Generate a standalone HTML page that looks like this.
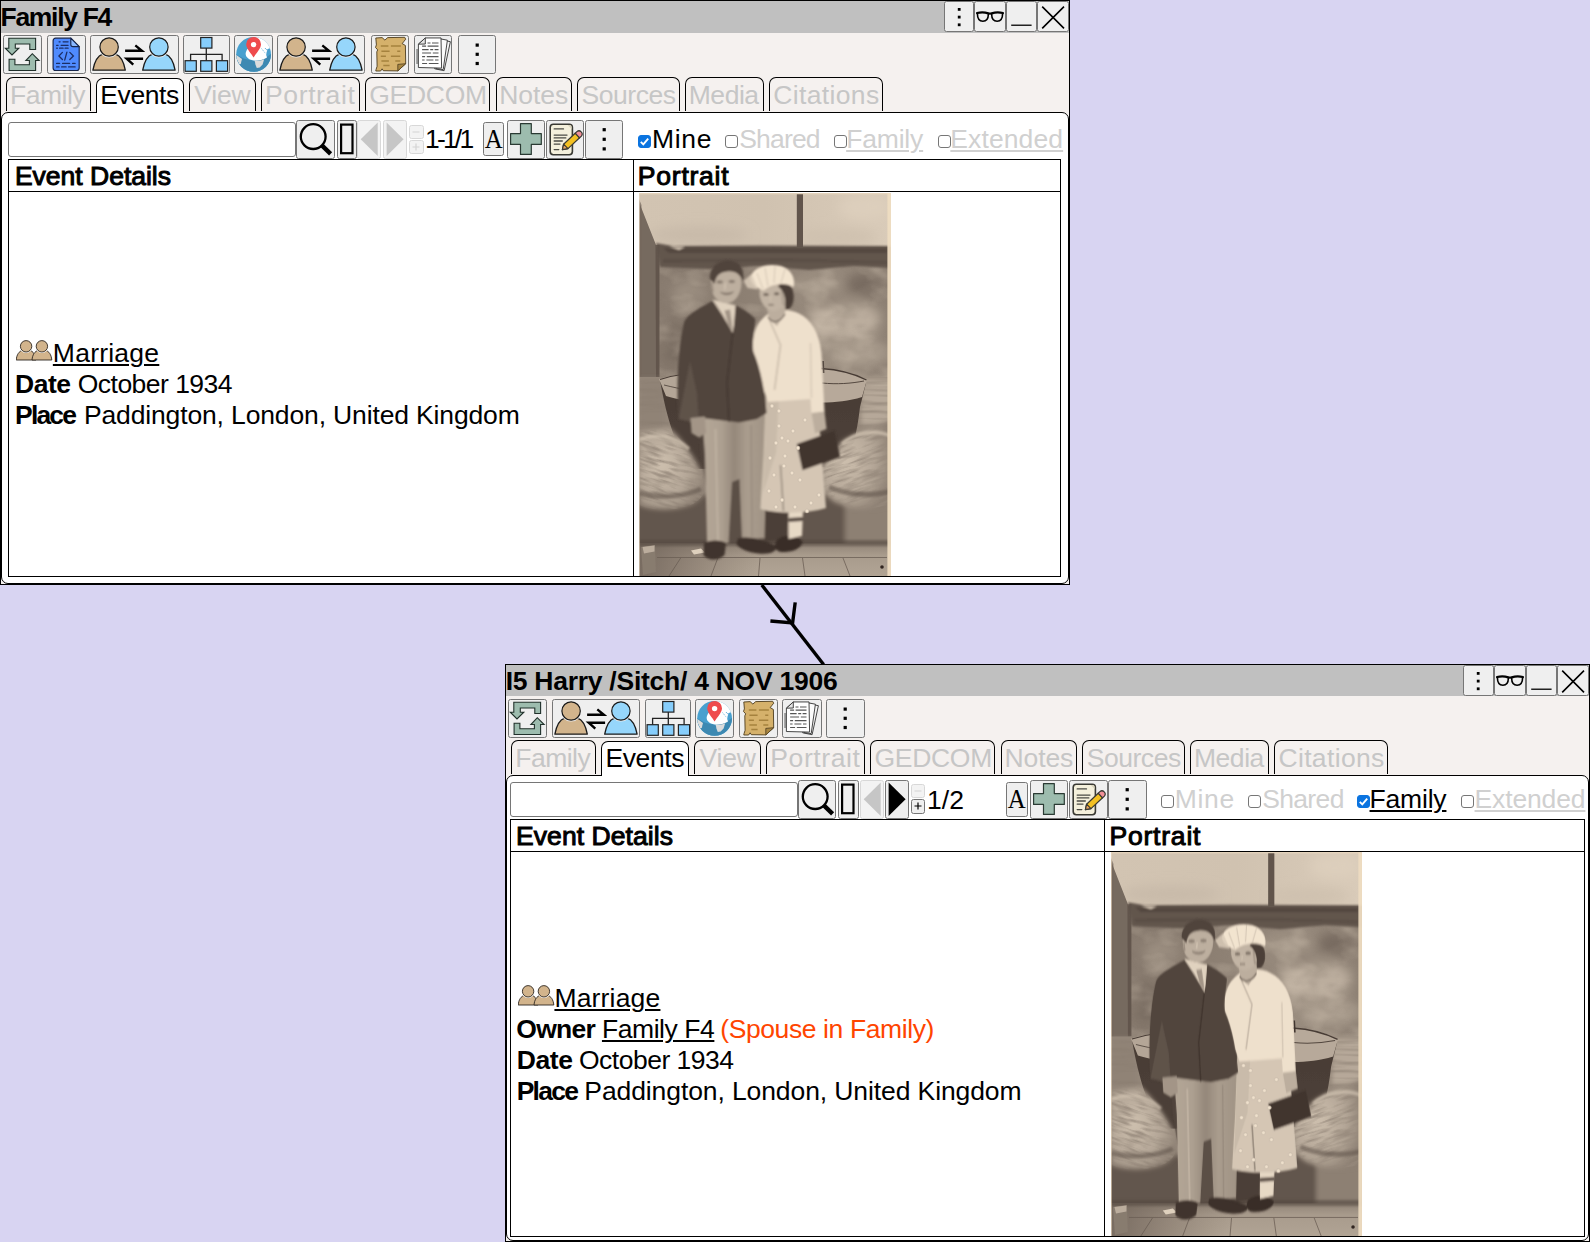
<!DOCTYPE html><html lang="en"><head><meta charset="utf-8"><title>Family F4</title><style>
*{box-sizing:border-box}
html,body{margin:0;padding:0;overflow:hidden}
body{width:1590px;height:1242px;overflow:hidden;position:relative;background:#d8d4f2;font-family:"Liberation Sans",sans-serif;font-size:26.5px;line-height:30px;color:#000}
.win{position:absolute;border:1px solid #000;background:#f5f1ef;overflow:hidden}
.win div,.win button,.win input,.win label,.win table,.win svg,.win span,.win a,.win b{position:absolute}
.line,.title,label,.tab span{white-space:pre}
.titlebar{left:0;right:0;background:#c0c0c0}
button{margin:0;padding:0;border:1px solid #767676;border-radius:2.5px;background:#efefef;font:inherit;color:#000;display:block;overflow:hidden}
button[disabled]{border-color:#d8d8d8;background:#f3f3f3;color:#bdbdbd}
button svg{left:-1px;top:-1px}
.tab{border:1px solid #000;border-bottom:none;border-radius:7px 7px 0 0;background:#f5f1ef;color:#c6c6c6}
.tab.sel{background:#fff;color:#000}
.panel{border:1px solid #000;border-radius:7px;background:#fff}
input.q{border:1px solid #767676;border-radius:3px;background:#fff;margin:0;padding:0}
.cb{width:13px;height:13px;border:1px solid #767676;border-radius:3px;background:#fff;margin:0;appearance:none;-webkit-appearance:none}
.cb:checked{background:#0b74e0;border-color:#0b74e0}
.ck{width:13px;height:13px}
label.off{color:#d0d0d0}
label.ul{text-decoration:underline;text-decoration-thickness:1.8px;text-underline-offset:2.2px}
table{border-collapse:collapse;table-layout:fixed;background:#fff}
td,th{border:1px solid #000;padding:0;position:relative;text-align:left;vertical-align:top;font-weight:400}

a.line{color:#000;text-decoration:underline;text-decoration-thickness:1.8px;text-underline-offset:2px}
.spouse{color:#ff4500}
</style></head><body>
<svg style="left:0;top:0;position:absolute" width="1590" height="1242" viewBox="0 0 1590 1242"><g stroke="#000" stroke-width="3.4" fill="none" stroke-linecap="butt"><path d="M761.8,585 L823.6,664.5"/><path d="M795.2,602.4 L792.6,623 L770.4,621"/></g></svg>
<div class="win" style="left:0px;top:0px;width:1070px;height:585px">
<div class="titlebar" style="top:0px;height:32px">
<div class="title" style="left:-0.45px;top:1.22px;letter-spacing:-1.319px;font-weight:700;">Family F4</div>
<button type="button" title="dots" style="left:943px;top:0px;width:30px;height:31px;"><svg width="30" height="31" viewBox="0 0 30 31" ><rect x="13.8" y="7.0" width="2.8" height="2.8" fill="#000"/><rect x="13.8" y="14.7" width="2.8" height="2.8" fill="#000"/><rect x="13.8" y="22.4" width="2.8" height="2.8" fill="#000"/></svg></button>
<button type="button" title="glasses" style="left:973px;top:0px;width:32px;height:31px;"><svg width="32" height="31" viewBox="0 0 32 31" ><g fill="none" stroke="#000" stroke-linecap="round"><path d="M3.1,12 C6,11.2 11,11.2 14.3,12.3 Q16,13 17.7,12.3 C21,11.2 26,11.2 28.9,12" stroke-width="2.3"/><path d="M3.4,12.6 C3.4,17.2 5.2,20.3 8.9,20.3 C12.6,20.3 14.3,17.2 14.4,13" stroke-width="1.6"/><path d="M28.6,12.6 C28.6,17.2 26.8,20.3 23.1,20.3 C19.4,20.3 17.7,17.2 17.6,13" stroke-width="1.6"/></g></svg></button>
<button type="button" title="min" style="left:1005px;top:0px;width:31px;height:31px;"><svg width="31" height="31" viewBox="0 0 31 31" ><path d="M5.2,24.2 H25.6" stroke="#222" stroke-width="1.6"/></svg></button>
<button type="button" title="close" style="left:1036px;top:0px;width:32px;height:31px;"><svg width="32" height="31" viewBox="0 0 32 31" ><path d="M5.2,5.6 L27,27.4 M27,5.6 L5.2,27.4" stroke="#000" stroke-width="1.6"/></svg></button>
</div>
<button type="button" title="refresh" style="left:2.2px;top:34.1px;width:38.4px;height:38.5px;"><svg width="38" height="38" viewBox="0 0 38 38" ><g fill="#9dbcae" stroke="#20302a" stroke-width="1.1" stroke-linejoin="miter"><polygon points="5.8,3.2 32.6,3.2 32.6,14.5 26.8,14.5 26.8,9.0 12.3,9.0 12.3,13.2 15.8,13.2 9.0,20.0 2.3,13.2 5.8,13.2"/><polygon points="6.1,35.5 32.6,35.5 32.6,25.5 36.1,25.5 29.3,18.7 22.9,25.5 26.4,25.5 26.4,29.7 11.9,29.7 11.9,24.2 6.1,24.2"/></g></svg></button>
<button type="button" title="code" style="left:46.3px;top:34.1px;width:38.4px;height:38.5px;"><svg width="38" height="38" viewBox="0 0 38 38" ><path d="M8.6,3.2 H23.8 L32.2,11.6 V33.0 a2.5,2.5 0 0 1 -2.5,2.5 H8.6 a2.5,2.5 0 0 1 -2.5,-2.5 V5.7 a2.5,2.5 0 0 1 2.5,-2.5 Z" fill="#4f8bff" stroke="#17254a" stroke-width="1.2" stroke-linejoin="round"/><path d="M23.8,3.2 V9.4 a2.2,2.2 0 0 0 2.2,2.2 H32.2 Z" fill="#8ab8ff" stroke="#17254a" stroke-width="1.1" stroke-linejoin="round"/><g stroke="#1b2e66" stroke-width="1.3" fill="none" stroke-linecap="round"><path d="M12.1,6.8 h1 M16.1,6.8 h5"/><path d="M9.6,10.3 h1.5 M14.1,10.3 h7"/><path d="M9.6,13.2 h0.8 M12.6,13.2 h3.5 M18.1,13.2 h3"/><path d="M15.4,17.4 L11.9,21.0 L15.4,24.5 M19.9,17.1 L17.7,25.1 M22.8,17.4 L26.4,21.0 L22.8,24.5"/><path d="M9.6,28.4 h3 M15.6,28.4 h7 M25.6,28.4 h2.5"/><path d="M9.6,31.9 h2.5 M14.6,31.9 h4.5 M21.6,31.9 h6.5"/></g></svg></button>
<button type="button" title="swap" style="left:89.3px;top:34.1px;width:88.4px;height:38.5px;"><svg width="88" height="38" viewBox="0 0 88 38" ><path d="M2.9,35.2 C4.6,26.200000000000003 8.1,20.700000000000003 12.6,19.200000000000003 L25.6,19.200000000000003 C30.1,20.700000000000003 33.6,26.200000000000003 35.3,35.2 Z" fill="#d2b48c" stroke="#1a1a1a" stroke-width="1.3" stroke-linejoin="round"/><circle cx="19.10000000000001" cy="12.0" r="10.6" fill="#efefef"/><circle cx="19.10000000000001" cy="12.0" r="9.2" fill="#d2b48c" stroke="#1a1a1a" stroke-width="1.2"/><path d="M52.7,35.2 C54.4,26.200000000000003 57.9,20.700000000000003 62.4,19.200000000000003 L75.4,19.200000000000003 C79.9,20.700000000000003 83.4,26.200000000000003 85.1,35.2 Z" fill="#96d6fb" stroke="#1a1a1a" stroke-width="1.3" stroke-linejoin="round"/><circle cx="68.89999999999999" cy="12.0" r="10.6" fill="#efefef"/><circle cx="68.89999999999999" cy="12.0" r="9.2" fill="#96d6fb" stroke="#1a1a1a" stroke-width="1.2"/><g stroke="#000" stroke-width="2.4" fill="none" stroke-linecap="butt"><path d="M35.1,15.7 H51.9 L45.3,10.4"/><path d="M53.1,23.7 H36.7 L43.3,29.6"/></g></svg></button>
<button type="button" title="tree" style="left:182.1px;top:34.1px;width:46.6px;height:38.5px;"><svg width="46" height="38" viewBox="0 0 46 38" ><g stroke="#222" stroke-width="1.3" fill="none"><path d="M23.3,13.1 V25.7 M7.6,25.7 V19.4 H39.1 V25.7"/></g><g fill="#86cdfb" stroke="#222" stroke-width="1.2"><rect x="17.7" y="2.5" width="11.2" height="10.6"/><rect x="2.1" y="25.7" width="11.2" height="10.6"/><rect x="17.7" y="25.7" width="11.2" height="10.6"/><rect x="33.4" y="25.7" width="11.2" height="10.6"/></g></svg></button>
<button type="button" title="globe" style="left:233px;top:34.1px;width:38.5px;height:38.5px;"><svg width="39" height="39" viewBox="0 0 39 39" ><defs><clipPath id="gclip"><circle cx="19.6" cy="19.4" r="17.4"/></clipPath></defs><circle cx="19.6" cy="19.4" r="17.4" fill="#48a0cf"/><g clip-path="url(#gclip)"><path d="M1,18.6 C8,23.6 14,25.4 19.6,25.4 C26.5,25.4 33,23 38.5,17.6 L40,40 L0,40 Z" fill="#3d89b2"/><path d="M11.9,17.2 L13,14.5 L16,12 L22,2 L30,1 L38,8 L36,13.2 L33.7,13.9 L32.6,17.2 L32.2,20.1 L33,22.5 C29,25 24,25.8 19.6,25.6 C17,25.2 14.5,24 13,22.3 C11.6,20.5 11.4,18.6 11.9,17.2 Z" fill="#fff"/><path d="M27.5,1 L38,9 L38,1 Z" fill="#f1f1f1"/><path d="M27.5,13.5 L31.5,18.5" stroke="#48a0cf" stroke-width="0.7" stroke-dasharray="1.2 0.9"/><path d="M31,13 C32,14.5 33,15 34,15" stroke="#48a0cf" stroke-width="0.8" fill="none"/><path d="M20.4,25.7 C24,26 27.5,25.4 30.2,24.2 L28.6,29.5 L25.7,32.4 L22.8,33.1 L21.4,29.5 L21,27 Z" fill="#dcdcdc"/><path d="M2,19.7 L8,23.9 L7.2,27 L6.9,28.8 L5.4,29.5 L3.2,25.2 L1.5,22 Z" fill="#dcdcdc"/></g><path d="M19.6,22.6 C17.200000000000003,18.400000000000002 12.200000000000001,13.600000000000001 12.200000000000001,9.3 a7.4,7.4 0 0 1 14.8,0 C27.0,13.600000000000001 22.0,18.400000000000002 19.6,22.6 Z" fill="#ef4b4d"/><circle cx="19.6" cy="9.600000000000001" r="2.7" fill="#fff"/></svg></button>
<button type="button" title="swap" style="left:276px;top:34.1px;width:88.4px;height:38.5px;"><svg width="88" height="38" viewBox="0 0 88 38" ><path d="M2.9,35.2 C4.6,26.200000000000003 8.1,20.700000000000003 12.6,19.200000000000003 L25.6,19.200000000000003 C30.1,20.700000000000003 33.6,26.200000000000003 35.3,35.2 Z" fill="#d2b48c" stroke="#1a1a1a" stroke-width="1.3" stroke-linejoin="round"/><circle cx="19.10000000000001" cy="12.0" r="10.6" fill="#efefef"/><circle cx="19.10000000000001" cy="12.0" r="9.2" fill="#d2b48c" stroke="#1a1a1a" stroke-width="1.2"/><path d="M52.7,35.2 C54.4,26.200000000000003 57.9,20.700000000000003 62.4,19.200000000000003 L75.4,19.200000000000003 C79.9,20.700000000000003 83.4,26.200000000000003 85.1,35.2 Z" fill="#96d6fb" stroke="#1a1a1a" stroke-width="1.3" stroke-linejoin="round"/><circle cx="68.89999999999999" cy="12.0" r="10.6" fill="#efefef"/><circle cx="68.89999999999999" cy="12.0" r="9.2" fill="#96d6fb" stroke="#1a1a1a" stroke-width="1.2"/><g stroke="#000" stroke-width="2.4" fill="none" stroke-linecap="butt"><path d="M35.1,15.7 H51.9 L45.3,10.4"/><path d="M53.1,23.7 H36.7 L43.3,29.6"/></g></svg></button>
<button type="button" title="parch" style="left:370px;top:34.1px;width:38.4px;height:38.5px;"><svg width="39" height="38" viewBox="0 0 39 38" ><polygon points="4.8,3 11.1,2.6 13.9,5.1 16.7,2.6 33.7,2.3 34.7,4.2 32.7,6.7 31.2,8.6 34.4,10.5 34.7,28.7 26.8,35.9 12.3,35.7 11.1,33.8 9.6,36 4.8,36 5.1,34.4 6.1,31.3 5.8,16.8 6.7,14.9 4.5,12.4 5.4,9.9" fill="#d5b16b" stroke="#4d3c1e" stroke-width="0.9" stroke-linejoin="round"/><path d="M26.8,29.4 L34.7,28.7 L26.8,35.9 Z" fill="#a98641" stroke="#4d3c1e" stroke-width="0.8" stroke-linejoin="round"/><g stroke="#a5823e" stroke-width="1.5" stroke-linecap="butt"><path d="M9.8,11.1 H17.4 M19.9,11.1 H29.9"/><path d="M10.4,16.2 H18.6 M26.2,16.2 H29.3"/><path d="M9.8,21.2 H14.9 M19.9,21.2 H29.3"/><path d="M10.4,26 H17.9 M24.3,26 H29.3"/><path d="M12.3,30.6 H18.6"/></g></svg></button>
<button type="button" title="docs" style="left:413px;top:34.1px;width:38.4px;height:38.5px;"><svg width="40" height="38" viewBox="0 0 40 38" ><g stroke="#333" stroke-width="0.9" stroke-linejoin="round"><path d="M24,4.2 L36.4,6.7 L30.1,35.7 L20.7,33.8 Z" fill="#f6f6f6"/><path d="M24,3.4 L33.4,5.2 L29.2,34.6 L22,33.6 Z" fill="#fbfbfb"/><path d="M11.3,2.95 L27,2.95 L27.6,33.1 L4.4,32.5 L4.4,9.2 Z" fill="#fff"/><path d="M11.3,2.95 L11.3,9 L4.4,9.2 Z" fill="#e4e4e4"/></g><g stroke="#555" stroke-width="1.2"><path d="M13.5,8 h3 M18,8 h6.5"/><path d="M8.1,11.1 h4 M13.6,11.1 h10.9"/><path d="M8.1,14.6 h6.5 M16.2,14.6 h3 M20.6,14.6 h3.9"/><path d="M8.1,18 h9 M18.8,18 h5.7"/><path d="M8.1,21.6 h3 M12.8,21.6 h11.7"/><path d="M8.1,25 h2.5 M12.4,25 h7 M21,25 h3.5"/><path d="M8.1,28.5 h5 M14.8,28.5 h9.7"/></g><path d="M3.1,14 v15" stroke="#8a8a8a" stroke-width="1.6"/></svg></button>
<button type="button" title="dots" style="left:457px;top:34.1px;width:38.4px;height:38.5px;"><svg width="38" height="38" viewBox="0 0 38 38" ><rect x="17.6" y="8.5" width="3.2" height="3.2" fill="#000"/><rect x="17.6" y="17.7" width="3.2" height="3.2" fill="#000"/><rect x="17.6" y="26.9" width="3.2" height="3.2" fill="#000"/></svg></button>
<div class="tab" style="left:5px;top:76px;width:85px;height:33.5px;z-index:1"><span style="left:3.05px;top:1.82px;letter-spacing:-0.51px;">Family</span></div>
<div class="tab sel" style="left:95.2px;top:77px;width:87.8px;height:35px;z-index:3"><span style="left:3.05px;top:0.82px;letter-spacing:-0.39px;">Events</span></div>
<div class="tab" style="left:188px;top:76px;width:67px;height:33.5px;z-index:1"><span style="left:4.25px;top:1.82px;letter-spacing:-0.15px;">View</span></div>
<div class="tab" style="left:260px;top:76px;width:98.7px;height:33.5px;z-index:1"><span style="left:3.05px;top:1.82px;letter-spacing:0.614px;">Portrait</span></div>
<div class="tab" style="left:364px;top:76px;width:125px;height:33.5px;z-index:1"><span style="left:3.25px;top:1.82px;letter-spacing:-0.29px;">GEDCOM</span></div>
<div class="tab" style="left:494.8px;top:76px;width:76.2px;height:33.5px;z-index:1"><span style="left:2.45px;top:1.82px;letter-spacing:-0.075px;">Notes</span></div>
<div class="tab" style="left:576.2px;top:76px;width:102.8px;height:33.5px;z-index:1"><span style="left:3.35px;top:1.82px;letter-spacing:-0.467px;">Sources</span></div>
<div class="tab" style="left:684.2px;top:76px;width:78.8px;height:33.5px;z-index:1"><span style="left:2.55px;top:1.82px;letter-spacing:-0.45px;">Media</span></div>
<div class="tab" style="left:768.2px;top:76px;width:113.6px;height:33.5px;z-index:1"><span style="left:3.05px;top:1.82px;letter-spacing:0.35px;">Citations</span></div>
<div class="panel" style="left:0px;top:111px;width:1068px;height:472px;z-index:2">
<input class="q" type="text" aria-label="Search" style="left:6.2px;top:9.3px;width:288.2px;height:34.5px">
<button type="button" title="Search" style="left:294px;top:7.2px;width:39.3px;height:38.5px;"><svg width="39" height="38" viewBox="0 0 39 38" ><circle cx="17.2" cy="16.6" r="12.4" fill="none" stroke="#000" stroke-width="2.3"/><path d="M25.6,25.2 L34.6,33.8" stroke="#000" stroke-width="4.4" stroke-linecap="butt"/></svg></button>
<button type="button" title="Column" style="left:334.5px;top:7.2px;width:20.0px;height:38.5px;"><svg width="20" height="38" viewBox="0 0 20 38" ><rect x="4.1" y="4.6" width="11.4" height="28.6" fill="none" stroke="#000" stroke-width="2.2"/></svg></button>
<button type="button" disabled title="Previous" style="left:355.4px;top:7.2px;width:24px;height:38.5px;"><svg width="24" height="38" viewBox="0 0 24 38" ><polygon points="3.7,19.3 20.7,2.4 20.7,36" fill="#c6c6c6"/></svg></button>
<button type="button" disabled title="Next" style="left:380.5px;top:7.2px;width:24px;height:38.5px;"><svg width="24" height="38" viewBox="0 0 24 38" ><polygon points="20.6,19.3 3.6,2.4 3.6,36" fill="#c6c6c6"/></svg></button>
<button type="button" disabled title="Less" style="left:407.2px;top:11.6px;width:14.4px;height:14px;"><svg width="14" height="14" viewBox="0 0 14 14" ><path d="M3.5,7 H10.5" stroke="#d4d4d4" stroke-width="1.2" fill="none"/></svg></button>
<button type="button" disabled title="More" style="left:407.2px;top:26.6px;width:14.4px;height:14.4px;"><svg width="14" height="14" viewBox="0 0 14 14" ><path d="M3.5,7 H10.5 M7,3.5 V10.5" stroke="#d4d4d4" stroke-width="1.2" fill="none"/></svg></button>
<div class="line" style="left:423.0px;top:11.22px;letter-spacing:-2.812px;">1-1/1</div>
<button type="button" title="Font" style="left:481.2px;top:9.2px;width:20.6px;height:34.2px;"><span style="left:0;right:0;top:1.04px;text-align:center;font-family:'Liberation Serif',serif;font-size:27px;transform:scaleX(0.92)">A</span></button>
<button type="button" title="Add" style="left:505.2px;top:7.2px;width:38.2px;height:38.5px;"><svg width="38" height="38" viewBox="0 0 38 38" ><path d="M13.5,3.6 H24.3 V13.6 H34.3 V24.4 H24.3 V34.4 H13.5 V24.4 H3.6 V13.6 H13.5 Z" fill="#9dbcae" stroke="#2a3a33" stroke-width="1.2" stroke-linejoin="round"/></svg></button>
<button type="button" title="Edit" style="left:544.2px;top:7.2px;width:38.2px;height:38.5px;"><svg width="38" height="38" viewBox="0 0 38 38" ><rect x="4.2" y="4.2" width="22.2" height="30.6" rx="3.2" fill="#f4f0dc" stroke="#3a3a34" stroke-width="1.6"/><path d="M21.6,5 L25.6,9 L25.6,6.6 Q25.6,5 24,5 Z" fill="#d9d4bd"/><g stroke="#4a4a44" stroke-width="1.3" stroke-linecap="round"><path d="M8.2,8.9 h9.3"/><path d="M8.2,15.1 h12.8"/><path d="M8.2,17.9 h11.6"/><path d="M8.2,21 h8.1"/><path d="M8.2,24.1 h5.8"/><path d="M8.2,29.6 h4.6"/></g><g stroke="#3a3a34" stroke-width="1.2" stroke-linejoin="round"><path d="M16.4,29.6 L17.6,24.2 L29.2,13.2 L33.6,17.8 L22,28.6 Z" fill="#f3c022"/><path d="M29.2,13.2 L30.9,11.6 a3.2,3.2 0 0 1 4.5,4.5 L33.6,17.8 Z" fill="#f29099"/><path d="M16.4,29.6 L17.6,24.2 L22,28.6 Z" fill="#e9a35f"/></g></svg></button>
<button type="button" title="More" style="left:583.2px;top:7.2px;width:38.2px;height:38.5px;"><svg width="38" height="38" viewBox="0 0 38 38" ><rect x="17.6" y="8.1" width="3.2" height="3.2" fill="#000"/><rect x="17.6" y="17.7" width="3.2" height="3.2" fill="#000"/><rect x="17.6" y="27.3" width="3.2" height="3.2" fill="#000"/></svg></button>
<input type="checkbox" class="cb" checked aria-label="Mine" style="left:636.2px;top:21.6px">
<svg class="ck" style="left:636.2px;top:21.6px" viewBox="0 0 13 13"><path d="M2.8,6.8 L5.3,9.3 L10.2,3.6" stroke="#fff" stroke-width="1.9" fill="none"/></svg>
<label style="left:649.95px;top:11.22px;letter-spacing:0.7px;">Mine</label>
<input type="checkbox" class="cb" aria-label="Shared" style="left:723.2px;top:21.6px">
<label class="off" style="left:737.25px;top:11.22px;letter-spacing:-0.82px;">Shared</label>
<input type="checkbox" class="cb" aria-label="Family" style="left:831.8px;top:21.6px">
<label class="off ul" style="left:844.15px;top:11.22px;letter-spacing:-0.17px;">Family</label>
<input type="checkbox" class="cb" aria-label="Extended" style="left:935.8px;top:21.6px">
<label class="off ul" style="left:948.35px;top:11.22px;letter-spacing:0.1px;">Extended</label>
<table style="left:6.3px;top:46.2px;width:1052.7px;height:417.0px"><colgroup><col style="width:624.7px"><col></colgroup>
<thead><tr style="height:31.8px"><th><div class="line" style="left:5.65px;top:0.32px;letter-spacing:-0.008px;-webkit-text-stroke:1px #000;">Event Details</div></th><th><div class="line" style="left:3.85px;top:0.32px;letter-spacing:0.771px;-webkit-text-stroke:1px #000;">Portrait</div></th></tr></thead>
<tbody><tr style="height:385.2px"><td>
<div style="left:6.6px;top:146.6px;width:37px;height:22px"><svg width="37" height="22" viewBox="0 0 37 22" ><path d="M0.2,21 C0.7,15.5 3.1,12.3 6.5,11.2 L13.7,11.2 C17.1,12.3 19.5,15.5 20.0,21 Z" fill="#d2b48c" stroke="#2e2720" stroke-width="0.9" stroke-linejoin="round"/><circle cx="10.1" cy="7.3" r="6.7" fill="#fff"/><circle cx="10.1" cy="7.3" r="5.7" fill="#d2b48c" stroke="#2e2720" stroke-width="0.9"/><path d="M16.0,21 C16.5,15.5 18.9,12.3 22.3,11.2 L29.5,11.2 C32.9,12.3 35.3,15.5 35.8,21 Z" fill="#d2b48c" stroke="#2e2720" stroke-width="0.9" stroke-linejoin="round"/><circle cx="25.9" cy="7.3" r="6.7" fill="#fff"/><circle cx="25.9" cy="7.3" r="5.7" fill="#d2b48c" stroke="#2e2720" stroke-width="0.9"/></svg></div>
<a class="line" style="left:43.55px;top:146.02px;letter-spacing:0.236px;">Marriage</a>
<b class="line" style="left:5.75px;top:177.12px;letter-spacing:-0.517px;font-weight:700;">Date</b>
<div class="line" style="left:68.45px;top:177.12px;letter-spacing:-0.527px;">October 1934</div>
<b class="line" style="left:5.75px;top:208.02px;letter-spacing:-1.825px;font-weight:700;">Place</b>
<div class="line" style="left:74.65px;top:208.02px;letter-spacing:-0.142px;">Paddington, London, United Kingdom</div>
</td><td>
<div style="left:5.3px;top:0.9px;width:252px;height:383px"><svg width="252" height="383" viewBox="0 0 252 383" preserveAspectRatio="none" style="display:block"><defs>
<filter id="b0a" x="0" y="0" width="252" height="383" filterUnits="userSpaceOnUse"><feGaussianBlur stdDeviation="0.6"/></filter>
<filter id="b0pa" x="0" y="0" width="252" height="383" filterUnits="userSpaceOnUse"><feGaussianBlur stdDeviation="0.8"/></filter>
<filter id="b1a" x="0" y="0" width="252" height="383" filterUnits="userSpaceOnUse"><feGaussianBlur stdDeviation="1.1"/></filter>
<filter id="b2a" x="0" y="0" width="252" height="383" filterUnits="userSpaceOnUse"><feGaussianBlur stdDeviation="2.4"/></filter>
<filter id="b4a" x="0" y="0" width="252" height="383" filterUnits="userSpaceOnUse"><feGaussianBlur stdDeviation="6"/></filter>
<filter id="nza" x="0" y="0" width="1" height="1"><feTurbulence type="fractalNoise" baseFrequency="0.03 0.045" numOctaves="3" seed="11" result="t"/><feColorMatrix in="t" type="matrix" values="0 0 0 0 0.27  0 0 0 0 0.22  0 0 0 0 0.17  1.9 0 0 0 -0.78"/></filter>
<filter id="nla" x="0" y="0" width="1" height="1"><feTurbulence type="fractalNoise" baseFrequency="0.03 0.045" numOctaves="3" seed="23" result="t"/><feColorMatrix in="t" type="matrix" values="0 0 0 0 0.78  0 0 0 0 0.73  0 0 0 0 0.63  1.9 0 0 0 -0.85"/></filter>
<filter id="nwa" x="0" y="0" width="1" height="1"><feTurbulence type="fractalNoise" baseFrequency="0.02 0.22" numOctaves="2" seed="3" result="t"/><feColorMatrix in="t" type="matrix" values="0 0 0 0 0.25  0 0 0 0 0.2  0 0 0 0 0.15  2.4 0 0 0 -1.0"/></filter>
<filter id="nsa" x="0" y="0" width="1" height="1"><feTurbulence type="fractalNoise" baseFrequency="0.05 0.3" numOctaves="2" seed="9" result="t"/><feColorMatrix in="t" type="matrix" values="0 0 0 0 0.3  0 0 0 0 0.25  0 0 0 0 0.19  3 0 0 0 -1.25"/></filter>
<linearGradient id="skya" x1="0" y1="0" x2="1" y2="0"><stop offset="0" stop-color="#85776a"/><stop offset="0.4" stop-color="#8d7f6d"/><stop offset="0.75" stop-color="#998b78"/><stop offset="1" stop-color="#8d7f6d"/></linearGradient>
<linearGradient id="topa" x1="0" y1="0" x2="1" y2="0"><stop offset="0" stop-color="#cec5b2"/><stop offset="0.5" stop-color="#cdc3af"/><stop offset="1" stop-color="#d5ccba"/></linearGradient>
<linearGradient id="flra" x1="0" y1="0" x2="0" y2="1"><stop offset="0" stop-color="#918370"/><stop offset="0.35" stop-color="#a89b87"/><stop offset="1" stop-color="#b1a490"/></linearGradient>
<linearGradient id="trsa" x1="0" y1="0" x2="1" y2="0"><stop offset="0" stop-color="#b5a792"/><stop offset="0.3" stop-color="#aea08b"/><stop offset="0.5" stop-color="#968874"/><stop offset="0.7" stop-color="#ab9d88"/><stop offset="1" stop-color="#a1937f"/></linearGradient>
<linearGradient id="hulla" x1="0" y1="0" x2="0" y2="1"><stop offset="0" stop-color="#463c35"/><stop offset="1" stop-color="#4c4239"/></linearGradient>
<radialGradient id="wvLa" cx="0.35" cy="0.45" r="0.7"><stop offset="0" stop-color="#cdc1ab"/><stop offset="0.6" stop-color="#b3a690"/><stop offset="1" stop-color="#8c7f6d"/></radialGradient>
<linearGradient id="fdka" x1="0" y1="0" x2="1" y2="0"><stop offset="0" stop-color="#6f6353" stop-opacity="0.85"/><stop offset="1" stop-color="#7d705f" stop-opacity="0"/></linearGradient>
<filter id="tonea" x="0" y="0" width="252" height="383" filterUnits="userSpaceOnUse" color-interpolation-filters="sRGB"><feColorMatrix type="matrix" values="0.2166 0.7286 0.0736 0 0.0345  0.2131 0.7168 0.0724 0 -0.0082  0.1966 0.6614 0.0668 0 -0.0179  0 0 0 1 0"/></filter>
<clipPath id="pca"><rect x="0" y="0" width="252" height="383"/></clipPath>
<clipPath id="wcla"><path d="M0,238 L30,235 C40,244 52,258 66,286 C68,296 64,306 54,311 C38,318 14,318 0,312 Z M252,227 C236,233 218,240 206,247 C196,255 188,264 183,274 C181,288 184,300 194,308 C212,318 238,316 252,311 Z"/></clipPath>
</defs><g clip-path="url(#pca)"><g filter="url(#tonea)"><rect width="252" height="383" fill="#978a77"/><rect x="0" y="50" width="252" height="140" fill="url(#skya)"/><g filter="url(#b4a)"><ellipse cx="206" cy="128" rx="36" ry="20" fill="#bcb09c" opacity="0.95"/><ellipse cx="176" cy="94" rx="28" ry="8" fill="#ab9e8a" opacity="0.8"/><ellipse cx="222" cy="160" rx="30" ry="12" fill="#b1a48f" opacity="0.85"/><ellipse cx="50" cy="100" rx="18" ry="12" fill="#a09381" opacity="0.8"/><ellipse cx="36" cy="150" rx="14" ry="24" fill="#776a5c" opacity="0.8"/><ellipse cx="226" cy="92" rx="20" ry="12" fill="#726457" opacity="0.8"/><ellipse cx="160" cy="150" rx="16" ry="14" fill="#837566" opacity="0.6"/><ellipse cx="190" cy="108" rx="18" ry="7" fill="#7c6e60" opacity="0.6"/></g><g opacity="0.6"><rect x="19" y="72" width="231" height="112" filter="url(#nza)"/></g><g opacity="0.35"><rect x="19" y="72" width="231" height="112" filter="url(#nla)"/></g><rect x="0" y="0" width="252" height="54" fill="url(#topa)"/><g filter="url(#b4a)"><ellipse cx="60" cy="42" rx="50" ry="9" fill="#c3b9a5" opacity="0.8"/><ellipse cx="225" cy="14" rx="26" ry="12" fill="#d9d1c0" opacity="0.8"/><ellipse cx="200" cy="44" rx="40" ry="8" fill="#c9bfab" opacity="0.7"/></g><rect x="157.8" y="1" width="6.2" height="53" fill="#5f5449" filter="url(#b0a)"/><g filter="url(#b1a)"><path d="M17,50 L34,53 L120,52.5 L252,53 L252,75 L215,73 L170,77 L120,73 L70,76 L21,74 Z" fill="#62564a"/><path d="M24,55 L248,55.5 L248,60 L30,60 Z" fill="#4f453a" opacity="0.85"/><path d="M24,66 L150,65 L248,68 L248,71 L150,69 L24,70 Z" fill="#574c41" opacity="0.6"/><path d="M30,53.5 L46,54 L40,57 Z" fill="#c9bfab"/></g><g filter="url(#b0a)"><path d="M0,0 L0,9 L17,52 L20,74 L19.5,185 L0,186 Z" fill="#766a5b"/><path d="M16.5,52 L20.5,52 L20.5,184 L17,184 Z" fill="#5e5246" opacity="0.85"/><path d="M0,6 L0,186 L2.5,186 L2.5,12 Z" fill="#73675a" opacity="0.7"/></g><rect x="0" y="184" width="252" height="170" fill="#948773"/><g filter="url(#b2a)"><rect x="0" y="186" width="26" height="52" fill="#908370"/><rect x="222" y="186" width="30" height="46" fill="#b5a994"/></g><g opacity="0.55"><rect x="0" y="186" width="252" height="60" filter="url(#nwa)"/></g><g filter="url(#b0a)"><path d="M21,187 L60,196 L190,198 L227,190 L221,214 C218,240 213,262 204,274 L52,276 C38,256 28,228 21,187 Z" fill="url(#hulla)"/><path d="M20,186 C28,183.5 38,181.5 46,180.5 L48,196 L62,199 L62,209 C48,208 36,206 27,203 Z" fill="#b3a793"/><path d="M182,175 C198,176 215,180 228,186.5 L223,204 C210,208 197,209.5 182,209.5 Z" fill="#b6aa96"/><path d="M182,175.5 C198,176.5 215,180.5 227.5,187" stroke="#463c33" stroke-width="1.4" fill="none"/><path d="M183,190 C198,191.5 212,190.5 225,188" stroke="#53483e" stroke-width="1" fill="none"/><path d="M21,186.5 C29,184 38,182 46,181" stroke="#463c33" stroke-width="1.2" fill="none"/><path d="M25,192 C33,194 42,196 50,197" stroke="#53483e" stroke-width="0.9" fill="none"/><path d="M184,168 L184.6,180" stroke="#3f352d" stroke-width="1.6"/></g><g filter="url(#b2a)"><rect x="-5" y="302" width="262" height="54" fill="#63574b"/><rect x="206" y="300" width="50" height="52" fill="#8d806e"/></g><g filter="url(#b2a)"><path d="M0,238 L30,235 C40,244 52,258 66,286 C68,296 64,306 54,311 C38,318 14,318 0,312 Z" fill="url(#wvLa)"/><path d="M252,227 C236,233 218,240 206,247 C196,255 188,264 183,274 C181,288 184,300 194,308 C212,318 238,316 252,311 Z" fill="url(#wvLa)"/></g><g clip-path="url(#wcla)" opacity="0.8"><g transform="rotate(18 30 275)"><rect x="-20" y="220" width="110" height="110" filter="url(#nsa)"/></g><g transform="rotate(-18 220 272)"><rect x="160" y="215" width="120" height="115" filter="url(#nsa)"/></g></g><g filter="url(#b1a)" fill="none"><path d="M0,247 C16,240 36,243 50,256" stroke="#d0c3ac" stroke-width="3.5" opacity="0.75"/><path d="M252,243 C236,236 216,239 203,251" stroke="#d0c3ac" stroke-width="3.5" opacity="0.75"/><path d="M0,300 C20,306 44,304 62,296" stroke="#62564a" stroke-width="5" opacity="0.6"/><path d="M252,298 C232,304 208,302 190,294" stroke="#62564a" stroke-width="5" opacity="0.6"/></g><rect x="0" y="350.5" width="252" height="33" fill="url(#flra)"/><rect x="0" y="350.5" width="120" height="33" fill="url(#fdka)"/><rect x="0" y="347" width="252" height="6" fill="#52473c" opacity="0.55" filter="url(#b1a)"/><g stroke="#6a5d4e" stroke-width="0.9" opacity="0.85" fill="none"><path d="M18,364.5 H248"/><path d="M79,364.5 L72,383 M121,365 L119.5,383 M163.5,365 L166,383 M204,365 L211,383 M42,364.5 L30,383"/></g><g filter="url(#b0a)"><path d="M2,354 L16,352 L17,379 L4,382 Z" fill="#897b67"/><path d="M3.5,354 L15.5,352.5 L15.5,358.5 L5,360.5 Z" fill="#bbae98"/><path d="M52,357.5 L62,355.5 L66,359.5 L55,361.5 Z" fill="#dad1bf"/><circle cx="243" cy="374" r="1.8" fill="#2f2822"/></g><g filter="url(#b0pa)"><path d="M88,288 L102,282 L104,346 L90,349 Z" fill="#5a4f45"/><path d="M122,316 L150,317 L148,346 L126,349 Z" fill="#4a4038"/><path d="M60,228 L66,228 L68,300 L62,262 Z" fill="#51463c" opacity="0.7"/><path d="M63,222 L127,220 L127.5,262 L125.5,345 L103,346.5 L100.5,286 L93,289 L89.5,350 L68,350 L66,262 Z" fill="url(#trsa)"/><path d="M76.5,236 L79,349" stroke="#c6b9a3" stroke-width="1.8" opacity="0.75"/><path d="M112,232 L113,344" stroke="#8f806c" stroke-width="1.5" opacity="0.5"/><path d="M65,350 C70,346.5 83,346.5 87,350 L85.5,362 C79,368.5 68.5,367.5 64.5,362 Z" fill="#3d342d"/><path d="M98.5,346 C108,342.5 121,346 137,352.5 C139,358.5 131,361.5 120,360.5 C109,359.5 99.5,355.5 97.5,350.5 Z" fill="#3a312a"/><path d="M138,347 C146,340.5 157,342 163.5,348.5 C162.5,356.5 150,360.5 140,358.5 C135.5,356.5 135,351 138,347 Z" fill="#352d27"/><path d="M149.5,319 L164,319 L163,343 L149.5,346 Z" fill="#e2dac9"/><path d="M149.5,325 L164,324 L164,328 L149.5,329 Z" fill="#5a4e43"/><path d="M127,196 L173,196 L181,240 L187,315 C171,320 141,322 121.5,316 L124.5,262 Z" fill="#d3c7b2"/><path d="M127,200 L140,200 L137,260 L124,300 Z" fill="#c4b7a0" opacity="0.7"/><path d="M141.5,272 L144.5,318" stroke="#95887400" stroke-width="1.6"/><path d="M141.5,272 L144.5,318" stroke="#978a76" stroke-width="1.5"/><path d="M127.6,122 C135,116 150,115 160,120.5 C172,126 180.5,140 182.5,160 L185.5,219 L172.5,221 L171.5,206 L129,209 L124.5,197 C118.5,181 112.5,160 114.2,146 C116,134 120.5,127.5 127.6,122 Z" fill="#e8e1d2"/><path d="M130.5,127 L141.5,152 L135.5,197" stroke="#c6bcaa" stroke-width="1.6" fill="none"/><path d="M171.5,150 L172.5,205" stroke="#d2c9b8" stroke-width="1.4" fill="none"/><path d="M127.6,112 L145.5,110 L146.5,119 L138,133 L130,126 Z" fill="#bfae97"/><path d="M129,124 C133,131 141,130 146,121" stroke="#5d5146" stroke-width="1.2" fill="none"/><path d="M120.5,96 C123,90 140,88 146,93 L146.5,108 C145,114 139,118.5 133.5,118 C127,117 121.5,110 120.5,102 Z" fill="#c4b49d"/><ellipse cx="127" cy="101.6" rx="2.8" ry="1.5" fill="#5f5246" opacity="0.8"/><ellipse cx="137.6" cy="100.8" rx="2.8" ry="1.5" fill="#5f5246" opacity="0.8"/><path d="M132,103 L131.2,108" stroke="#d2c3ad" stroke-width="1.4" opacity="0.8"/><path d="M129.4,111.8 h5.2" stroke="#85756a" stroke-width="1.5"/><path d="M143,98 L144.5,112" stroke="#9c8c79" stroke-width="2" opacity="0.6"/><path d="M141,90.5 C150,88 156,95 154.5,107 C153.5,113.5 150.5,117 146.5,116.5 C147,107 146,98 139,93.5 Z" fill="#4a4038"/><path d="M111.3,86 C112,75 127,69.5 142,73 C152.5,76.5 156.5,85 154.7,94 C146,89.5 134,90 124.5,97.5 C117.5,95 112,91 111.3,86 Z" fill="#ebe5d7"/><path d="M104.5,88 L112.5,81 L119,96.5 L108.5,95 Z" fill="#d5ccba" opacity="0.85"/><path d="M118,80 L124,96 M126,75 L129,93 M136,73 L135,90 M146,76 L142,90" stroke="#cfc6b4" stroke-width="1" fill="none"/><path d="M73.5,108 C62,114 49,121 45.5,128 C40.5,146 36.8,184 39.5,226 L60,231 L64,225 L100,229.5 L118,226 L127.6,220 C126,200 122,176 114,158 C113,146 116,134 116.3,126 C110,119 101,114.5 96.5,112 L93.7,139.5 Z" fill="#4f453e"/><path d="M39.5,226 L60,231 L58,200 L51,168 Z" fill="#5d5249"/><path d="M93.7,139.5 L88,190 L90,229" stroke="#3b322c" stroke-width="1.3" fill="none" opacity="0.8"/><path d="M73.5,106.5 L96.5,112.5 L95,132 L93.7,140 L84,122 Z" fill="#dcd3c1"/><path d="M85.5,117.5 L91,116.5 L93,131 L93.5,139 L89,131 Z" fill="#a49579"/><path d="M72,84 C72,78 80,75 89,76 C97,77 102.5,82 102.5,90 C102.5,99 98,106.5 92,109.5 C86,111.5 78,109 74.5,102 C72.5,98 71.6,90 72,84 Z" fill="#c1af97"/><path d="M71,86 C70,74 80,66.5 91,67.5 C101,68.5 106,76 104.3,89 C101.5,81 96,77.5 88,78.5 C81,79.5 77,82 75.5,91 Z" fill="#4e443c"/><ellipse cx="80.8" cy="89" rx="3.2" ry="1.7" fill="#7b6b5b" opacity="0.75"/><ellipse cx="92.8" cy="88.5" rx="3.2" ry="1.7" fill="#7b6b5b" opacity="0.75"/><path d="M86.5,90 L85.8,96.5" stroke="#d6c7b0" stroke-width="1.6" opacity="0.8"/><path d="M73,90 L74,99" stroke="#8e7e6c" stroke-width="1.5" opacity="0.7"/><path d="M81.5,99.2 C85,102.6 91,102.6 94.5,98.8 C91,100.6 85,100.8 81.5,99.2 Z" fill="#8a7968" stroke="#7f6f5f" stroke-width="0.8"/><path d="M51.5,225 L66,223.5 L67,240 L60,244.5 L52.5,240 Z" fill="#a69580"/><path d="M172.5,220 L185.5,218.5 L187.5,236 L176,240.5 Z" fill="#bfae97"/><path d="M157.8,251 L195.4,237.8 L201.1,264 L163.5,277.3 Z" fill="#3f362f"/></g><g fill="#e9e2d4" stroke="#b5a893" stroke-width="0.4"><circle cx="133" cy="213" r="1.9"/><circle cx="140" cy="218" r="1.9"/><circle cx="166" cy="227" r="1.9"/><circle cx="140" cy="233" r="1.9"/><circle cx="154" cy="238" r="1.9"/><circle cx="143" cy="245" r="1.9"/><circle cx="149" cy="248" r="1.9"/><circle cx="137" cy="250" r="1.9"/><circle cx="159" cy="255" r="1.9"/><circle cx="131" cy="265" r="1.9"/><circle cx="146" cy="263" r="1.9"/><circle cx="145" cy="273" r="1.9"/><circle cx="135" cy="282" r="1.9"/><circle cx="153" cy="280" r="1.9"/><circle cx="161" cy="287" r="1.9"/><circle cx="130" cy="298" r="1.9"/><circle cx="143" cy="307" r="1.9"/><circle cx="137" cy="314" r="1.9"/><circle cx="156" cy="314" r="1.9"/><circle cx="172" cy="310" r="1.9"/><circle cx="180" cy="302" r="1.9"/><circle cx="168" cy="318" r="1.9"/></g></g><rect x="248.4" y="0" width="3.6" height="383" fill="#eedcc1" opacity="0.95"/><rect x="0" y="0" width="252" height="1.4" fill="#eedcc1" opacity="0.6"/><rect x="0" y="0" width="1" height="383" fill="#eedcc1" opacity="0.6"/></g></svg></div>
</td></tr></tbody></table></div></div>
<div class="win" style="left:505px;top:664px;width:1085px;height:578px">
<div class="titlebar" style="top:0px;height:31px">
<div class="title" style="left:-0.35px;top:1.22px;letter-spacing:-0.262px;font-weight:700;">I5 Harry /Sitch/ 4 NOV 1906</div>
<button type="button" title="dots" style="left:957px;top:0px;width:31px;height:31px;"><svg width="30" height="31" viewBox="0 0 30 31" ><rect x="13.8" y="7.0" width="2.8" height="2.8" fill="#000"/><rect x="13.8" y="14.7" width="2.8" height="2.8" fill="#000"/><rect x="13.8" y="22.4" width="2.8" height="2.8" fill="#000"/></svg></button>
<button type="button" title="glasses" style="left:988px;top:0px;width:32px;height:31px;"><svg width="32" height="31" viewBox="0 0 32 31" ><g fill="none" stroke="#000" stroke-linecap="round"><path d="M3.1,12 C6,11.2 11,11.2 14.3,12.3 Q16,13 17.7,12.3 C21,11.2 26,11.2 28.9,12" stroke-width="2.3"/><path d="M3.4,12.6 C3.4,17.2 5.2,20.3 8.9,20.3 C12.6,20.3 14.3,17.2 14.4,13" stroke-width="1.6"/><path d="M28.6,12.6 C28.6,17.2 26.8,20.3 23.1,20.3 C19.4,20.3 17.7,17.2 17.6,13" stroke-width="1.6"/></g></svg></button>
<button type="button" title="min" style="left:1020px;top:0px;width:31px;height:31px;"><svg width="31" height="31" viewBox="0 0 31 31" ><path d="M5.2,24.2 H25.6" stroke="#222" stroke-width="1.6"/></svg></button>
<button type="button" title="close" style="left:1051px;top:0px;width:32px;height:31px;"><svg width="32" height="31" viewBox="0 0 32 31" ><path d="M5.2,5.6 L27,27.4 M27,5.6 L5.2,27.4" stroke="#000" stroke-width="1.6"/></svg></button>
</div>
<button type="button" title="refresh" style="left:2.3px;top:34.2px;width:38.4px;height:38.5px;"><svg width="38" height="38" viewBox="0 0 38 38" ><g fill="#9dbcae" stroke="#20302a" stroke-width="1.1" stroke-linejoin="miter"><polygon points="5.8,3.2 32.6,3.2 32.6,14.5 26.8,14.5 26.8,9.0 12.3,9.0 12.3,13.2 15.8,13.2 9.0,20.0 2.3,13.2 5.8,13.2"/><polygon points="6.1,35.5 32.6,35.5 32.6,25.5 36.1,25.5 29.3,18.7 22.9,25.5 26.4,25.5 26.4,29.7 11.9,29.7 11.9,24.2 6.1,24.2"/></g></svg></button>
<button type="button" title="swap" style="left:46px;top:34.2px;width:88px;height:38.5px;"><svg width="88" height="38" viewBox="0 0 88 38" ><path d="M2.9,35.2 C4.6,26.200000000000003 8.1,20.700000000000003 12.6,19.200000000000003 L25.6,19.200000000000003 C30.1,20.700000000000003 33.6,26.200000000000003 35.3,35.2 Z" fill="#d2b48c" stroke="#1a1a1a" stroke-width="1.3" stroke-linejoin="round"/><circle cx="19.10000000000001" cy="12.0" r="10.6" fill="#efefef"/><circle cx="19.10000000000001" cy="12.0" r="9.2" fill="#d2b48c" stroke="#1a1a1a" stroke-width="1.2"/><path d="M52.7,35.2 C54.4,26.200000000000003 57.9,20.700000000000003 62.4,19.200000000000003 L75.4,19.200000000000003 C79.9,20.700000000000003 83.4,26.200000000000003 85.1,35.2 Z" fill="#96d6fb" stroke="#1a1a1a" stroke-width="1.3" stroke-linejoin="round"/><circle cx="68.89999999999999" cy="12.0" r="10.6" fill="#efefef"/><circle cx="68.89999999999999" cy="12.0" r="9.2" fill="#96d6fb" stroke="#1a1a1a" stroke-width="1.2"/><g stroke="#000" stroke-width="2.4" fill="none" stroke-linecap="butt"><path d="M35.1,15.7 H51.9 L45.3,10.4"/><path d="M53.1,23.7 H36.7 L43.3,29.6"/></g></svg></button>
<button type="button" title="tree" style="left:139px;top:34.2px;width:45.8px;height:38.5px;"><svg width="46" height="38" viewBox="0 0 46 38" ><g stroke="#222" stroke-width="1.3" fill="none"><path d="M23.3,13.1 V25.7 M7.6,25.7 V19.4 H39.1 V25.7"/></g><g fill="#86cdfb" stroke="#222" stroke-width="1.2"><rect x="17.7" y="2.5" width="11.2" height="10.6"/><rect x="2.1" y="25.7" width="11.2" height="10.6"/><rect x="17.7" y="25.7" width="11.2" height="10.6"/><rect x="33.4" y="25.7" width="11.2" height="10.6"/></g></svg></button>
<button type="button" title="globe" style="left:189.3px;top:34.2px;width:38.4px;height:38.5px;"><svg width="39" height="39" viewBox="0 0 39 39" ><defs><clipPath id="gclip"><circle cx="19.6" cy="19.4" r="17.4"/></clipPath></defs><circle cx="19.6" cy="19.4" r="17.4" fill="#48a0cf"/><g clip-path="url(#gclip)"><path d="M1,18.6 C8,23.6 14,25.4 19.6,25.4 C26.5,25.4 33,23 38.5,17.6 L40,40 L0,40 Z" fill="#3d89b2"/><path d="M11.9,17.2 L13,14.5 L16,12 L22,2 L30,1 L38,8 L36,13.2 L33.7,13.9 L32.6,17.2 L32.2,20.1 L33,22.5 C29,25 24,25.8 19.6,25.6 C17,25.2 14.5,24 13,22.3 C11.6,20.5 11.4,18.6 11.9,17.2 Z" fill="#fff"/><path d="M27.5,1 L38,9 L38,1 Z" fill="#f1f1f1"/><path d="M27.5,13.5 L31.5,18.5" stroke="#48a0cf" stroke-width="0.7" stroke-dasharray="1.2 0.9"/><path d="M31,13 C32,14.5 33,15 34,15" stroke="#48a0cf" stroke-width="0.8" fill="none"/><path d="M20.4,25.7 C24,26 27.5,25.4 30.2,24.2 L28.6,29.5 L25.7,32.4 L22.8,33.1 L21.4,29.5 L21,27 Z" fill="#dcdcdc"/><path d="M2,19.7 L8,23.9 L7.2,27 L6.9,28.8 L5.4,29.5 L3.2,25.2 L1.5,22 Z" fill="#dcdcdc"/></g><path d="M19.6,22.6 C17.200000000000003,18.400000000000002 12.200000000000001,13.600000000000001 12.200000000000001,9.3 a7.4,7.4 0 0 1 14.8,0 C27.0,13.600000000000001 22.0,18.400000000000002 19.6,22.6 Z" fill="#ef4b4d"/><circle cx="19.6" cy="9.600000000000001" r="2.7" fill="#fff"/></svg></button>
<button type="button" title="parch" style="left:233.1px;top:34.2px;width:38.8px;height:38.5px;"><svg width="39" height="38" viewBox="0 0 39 38" ><polygon points="4.8,3 11.1,2.6 13.9,5.1 16.7,2.6 33.7,2.3 34.7,4.2 32.7,6.7 31.2,8.6 34.4,10.5 34.7,28.7 26.8,35.9 12.3,35.7 11.1,33.8 9.6,36 4.8,36 5.1,34.4 6.1,31.3 5.8,16.8 6.7,14.9 4.5,12.4 5.4,9.9" fill="#d5b16b" stroke="#4d3c1e" stroke-width="0.9" stroke-linejoin="round"/><path d="M26.8,29.4 L34.7,28.7 L26.8,35.9 Z" fill="#a98641" stroke="#4d3c1e" stroke-width="0.8" stroke-linejoin="round"/><g stroke="#a5823e" stroke-width="1.5" stroke-linecap="butt"><path d="M9.8,11.1 H17.4 M19.9,11.1 H29.9"/><path d="M10.4,16.2 H18.6 M26.2,16.2 H29.3"/><path d="M9.8,21.2 H14.9 M19.9,21.2 H29.3"/><path d="M10.4,26 H17.9 M24.3,26 H29.3"/><path d="M12.3,30.6 H18.6"/></g></svg></button>
<button type="button" title="docs" style="left:276.3px;top:34.2px;width:39.6px;height:38.5px;"><svg width="40" height="38" viewBox="0 0 40 38" ><g stroke="#333" stroke-width="0.9" stroke-linejoin="round"><path d="M24,4.2 L36.4,6.7 L30.1,35.7 L20.7,33.8 Z" fill="#f6f6f6"/><path d="M24,3.4 L33.4,5.2 L29.2,34.6 L22,33.6 Z" fill="#fbfbfb"/><path d="M11.3,2.95 L27,2.95 L27.6,33.1 L4.4,32.5 L4.4,9.2 Z" fill="#fff"/><path d="M11.3,2.95 L11.3,9 L4.4,9.2 Z" fill="#e4e4e4"/></g><g stroke="#555" stroke-width="1.2"><path d="M13.5,8 h3 M18,8 h6.5"/><path d="M8.1,11.1 h4 M13.6,11.1 h10.9"/><path d="M8.1,14.6 h6.5 M16.2,14.6 h3 M20.6,14.6 h3.9"/><path d="M8.1,18 h9 M18.8,18 h5.7"/><path d="M8.1,21.6 h3 M12.8,21.6 h11.7"/><path d="M8.1,25 h2.5 M12.4,25 h7 M21,25 h3.5"/><path d="M8.1,28.5 h5 M14.8,28.5 h9.7"/></g><path d="M3.1,14 v15" stroke="#8a8a8a" stroke-width="1.6"/></svg></button>
<button type="button" title="dots" style="left:320.3px;top:34.2px;width:38.4px;height:38.5px;"><svg width="38" height="38" viewBox="0 0 38 38" ><rect x="17.6" y="8.5" width="3.2" height="3.2" fill="#000"/><rect x="17.6" y="17.7" width="3.2" height="3.2" fill="#000"/><rect x="17.6" y="26.9" width="3.2" height="3.2" fill="#000"/></svg></button>
<div class="tab" style="left:5.2px;top:75px;width:85.0px;height:33.5px;z-index:1"><span style="left:3.05px;top:1.82px;letter-spacing:-0.51px;">Family</span></div>
<div class="tab sel" style="left:95.4px;top:76px;width:87.8px;height:35px;z-index:3"><span style="left:3.05px;top:0.82px;letter-spacing:-0.39px;">Events</span></div>
<div class="tab" style="left:188.2px;top:75px;width:67.0px;height:33.5px;z-index:1"><span style="left:4.25px;top:1.82px;letter-spacing:-0.15px;">View</span></div>
<div class="tab" style="left:260.2px;top:75px;width:98.7px;height:33.5px;z-index:1"><span style="left:3.05px;top:1.82px;letter-spacing:0.614px;">Portrait</span></div>
<div class="tab" style="left:364.2px;top:75px;width:125.0px;height:33.5px;z-index:1"><span style="left:3.25px;top:1.82px;letter-spacing:-0.29px;">GEDCOM</span></div>
<div class="tab" style="left:495.0px;top:75px;width:76.2px;height:33.5px;z-index:1"><span style="left:2.45px;top:1.82px;letter-spacing:-0.075px;">Notes</span></div>
<div class="tab" style="left:576.4px;top:75px;width:102.8px;height:33.5px;z-index:1"><span style="left:3.35px;top:1.82px;letter-spacing:-0.467px;">Sources</span></div>
<div class="tab" style="left:684.4px;top:75px;width:78.8px;height:33.5px;z-index:1"><span style="left:2.55px;top:1.82px;letter-spacing:-0.45px;">Media</span></div>
<div class="tab" style="left:768.4px;top:75px;width:113.6px;height:33.5px;z-index:1"><span style="left:3.05px;top:1.82px;letter-spacing:0.35px;">Citations</span></div>
<div class="panel" style="left:0px;top:110px;width:1083px;height:466px;z-index:2">
<input class="q" type="text" aria-label="Search" style="left:3.3px;top:6.4px;width:287.3px;height:34.4px">
<button type="button" title="Search" style="left:291.2px;top:4.3px;width:38.3px;height:38.5px;"><svg width="39" height="38" viewBox="0 0 39 38" ><circle cx="17.2" cy="16.6" r="12.4" fill="none" stroke="#000" stroke-width="2.3"/><path d="M25.6,25.2 L34.6,33.8" stroke="#000" stroke-width="4.4" stroke-linecap="butt"/></svg></button>
<button type="button" title="Column" style="left:330.7px;top:4.3px;width:20.9px;height:38.5px;"><svg width="20" height="38" viewBox="0 0 20 38" ><rect x="4.1" y="4.6" width="11.4" height="28.6" fill="none" stroke="#000" stroke-width="2.2"/></svg></button>
<button type="button" disabled title="Previous" style="left:352.6px;top:4.3px;width:24px;height:38.5px;"><svg width="24" height="38" viewBox="0 0 24 38" ><polygon points="3.7,19.3 20.7,2.4 20.7,36" fill="#c6c6c6"/></svg></button>
<button type="button" title="Next" style="left:377.6px;top:4.3px;width:24px;height:38.5px;"><svg width="24" height="38" viewBox="0 0 24 38" ><polygon points="20.6,19.3 3.6,2.4 3.6,36" fill="#000"/></svg></button>
<button type="button" disabled title="Less" style="left:404px;top:8.4px;width:14.4px;height:14px;"><svg width="14" height="14" viewBox="0 0 14 14" ><path d="M3.5,7 H10.5" stroke="#d4d4d4" stroke-width="1.2" fill="none"/></svg></button>
<button type="button" title="More" style="left:404px;top:23.4px;width:14.4px;height:14.4px;"><svg width="14" height="14" viewBox="0 0 14 14" ><path d="M3.5,7 H10.5 M7,3.5 V10.5" stroke="#000" stroke-width="1.2" fill="none"/></svg></button>
<div class="line" style="left:420.0px;top:8.52px;letter-spacing:0.05px;">1/2</div>
<button type="button" title="Font" style="left:498.9px;top:6.2px;width:21.7px;height:34.6px;"><span style="left:0;right:0;top:1.04px;text-align:center;font-family:'Liberation Serif',serif;font-size:27px;transform:scaleX(0.92)">A</span></button>
<button type="button" title="Add" style="left:523.1px;top:4.3px;width:38.2px;height:38.5px;"><svg width="38" height="38" viewBox="0 0 38 38" ><path d="M13.5,3.6 H24.3 V13.6 H34.3 V24.4 H24.3 V34.4 H13.5 V24.4 H3.6 V13.6 H13.5 Z" fill="#9dbcae" stroke="#2a3a33" stroke-width="1.2" stroke-linejoin="round"/></svg></button>
<button type="button" title="Edit" style="left:562.4px;top:4.3px;width:38.2px;height:38.5px;"><svg width="38" height="38" viewBox="0 0 38 38" ><rect x="4.2" y="4.2" width="22.2" height="30.6" rx="3.2" fill="#f4f0dc" stroke="#3a3a34" stroke-width="1.6"/><path d="M21.6,5 L25.6,9 L25.6,6.6 Q25.6,5 24,5 Z" fill="#d9d4bd"/><g stroke="#4a4a44" stroke-width="1.3" stroke-linecap="round"><path d="M8.2,8.9 h9.3"/><path d="M8.2,15.1 h12.8"/><path d="M8.2,17.9 h11.6"/><path d="M8.2,21 h8.1"/><path d="M8.2,24.1 h5.8"/><path d="M8.2,29.6 h4.6"/></g><g stroke="#3a3a34" stroke-width="1.2" stroke-linejoin="round"><path d="M16.4,29.6 L17.6,24.2 L29.2,13.2 L33.6,17.8 L22,28.6 Z" fill="#f3c022"/><path d="M29.2,13.2 L30.9,11.6 a3.2,3.2 0 0 1 4.5,4.5 L33.6,17.8 Z" fill="#f29099"/><path d="M16.4,29.6 L17.6,24.2 L22,28.6 Z" fill="#e9a35f"/></g></svg></button>
<button type="button" title="More" style="left:601.4px;top:4.3px;width:38.2px;height:38.5px;"><svg width="38" height="38" viewBox="0 0 38 38" ><rect x="17.6" y="8.1" width="3.2" height="3.2" fill="#000"/><rect x="17.6" y="17.7" width="3.2" height="3.2" fill="#000"/><rect x="17.6" y="27.3" width="3.2" height="3.2" fill="#000"/></svg></button>
<input type="checkbox" class="cb" aria-label="Mine" style="left:654.2px;top:18.6px">
<label class="off" style="left:667.75px;top:8.22px;letter-spacing:0.667px;">Mine</label>
<input type="checkbox" class="cb" aria-label="Shared" style="left:741.2px;top:18.6px">
<label class="off" style="left:755.15px;top:8.22px;letter-spacing:-0.64px;">Shared</label>
<input type="checkbox" class="cb" checked aria-label="Family" style="left:850.2px;top:18.6px">
<svg class="ck" style="left:850.2px;top:18.6px" viewBox="0 0 13 13"><path d="M2.8,6.8 L5.3,9.3 L10.2,3.6" stroke="#fff" stroke-width="1.9" fill="none"/></svg>
<label class="ul" style="left:862.55px;top:8.22px;letter-spacing:-0.19px;">Family</label>
<input type="checkbox" class="cb" aria-label="Extended" style="left:954px;top:18.6px">
<label class="off ul" style="left:967.55px;top:8.22px;letter-spacing:-0.143px;">Extended</label>
<table style="left:3.3px;top:42.8px;width:1075.0px;height:417.5px"><colgroup><col style="width:594.1px"><col></colgroup>
<thead><tr style="height:32.2px"><th><div class="line" style="left:4.75px;top:0.92px;letter-spacing:0.067px;-webkit-text-stroke:1px #000;">Event Details</div></th><th><div class="line" style="left:4.05px;top:0.92px;letter-spacing:0.8px;-webkit-text-stroke:1px #000;">Portrait</div></th></tr></thead>
<tbody><tr style="height:385.3px"><td>
<div style="left:6.4px;top:131.6px;width:37px;height:22px"><svg width="37" height="22" viewBox="0 0 37 22" ><path d="M0.2,21 C0.7,15.5 3.1,12.3 6.5,11.2 L13.7,11.2 C17.1,12.3 19.5,15.5 20.0,21 Z" fill="#d2b48c" stroke="#2e2720" stroke-width="0.9" stroke-linejoin="round"/><circle cx="10.1" cy="7.3" r="6.7" fill="#fff"/><circle cx="10.1" cy="7.3" r="5.7" fill="#d2b48c" stroke="#2e2720" stroke-width="0.9"/><path d="M16.0,21 C16.5,15.5 18.9,12.3 22.3,11.2 L29.5,11.2 C32.9,12.3 35.3,15.5 35.8,21 Z" fill="#d2b48c" stroke="#2e2720" stroke-width="0.9" stroke-linejoin="round"/><circle cx="25.9" cy="7.3" r="6.7" fill="#fff"/><circle cx="25.9" cy="7.3" r="5.7" fill="#d2b48c" stroke="#2e2720" stroke-width="0.9"/></svg></div>
<a class="line" style="left:43.15px;top:131.02px;letter-spacing:0.179px;">Marriage</a>
<b class="line" style="left:5.0px;top:162.42px;letter-spacing:-0.75px;font-weight:700;">Owner</b>
<a class="line" style="left:90.65px;top:162.42px;letter-spacing:-0.431px;">Family F4</a>
<div class="line spouse" style="left:208.95px;top:162.42px;letter-spacing:-0.4px;">(Spouse in Family)</div>
<b class="line" style="left:5.35px;top:193.42px;letter-spacing:-0.383px;font-weight:700;">Date</b>
<div class="line" style="left:67.65px;top:193.42px;letter-spacing:-0.5px;">October 1934</div>
<b class="line" style="left:5.35px;top:224.42px;letter-spacing:-1.725px;font-weight:700;">Place</b>
<div class="line" style="left:73.05px;top:224.42px;letter-spacing:-0.1px;">Paddington, London, United Kingdom</div>
</td><td>
<div style="left:5.6px;top:0.2px;width:251px;height:384px"><svg width="251" height="384" viewBox="0 0 252 383" preserveAspectRatio="none" style="display:block"><defs>
<filter id="b0b" x="0" y="0" width="252" height="383" filterUnits="userSpaceOnUse"><feGaussianBlur stdDeviation="0.6"/></filter>
<filter id="b0pb" x="0" y="0" width="252" height="383" filterUnits="userSpaceOnUse"><feGaussianBlur stdDeviation="0.8"/></filter>
<filter id="b1b" x="0" y="0" width="252" height="383" filterUnits="userSpaceOnUse"><feGaussianBlur stdDeviation="1.1"/></filter>
<filter id="b2b" x="0" y="0" width="252" height="383" filterUnits="userSpaceOnUse"><feGaussianBlur stdDeviation="2.4"/></filter>
<filter id="b4b" x="0" y="0" width="252" height="383" filterUnits="userSpaceOnUse"><feGaussianBlur stdDeviation="6"/></filter>
<filter id="nzb" x="0" y="0" width="1" height="1"><feTurbulence type="fractalNoise" baseFrequency="0.03 0.045" numOctaves="3" seed="11" result="t"/><feColorMatrix in="t" type="matrix" values="0 0 0 0 0.27  0 0 0 0 0.22  0 0 0 0 0.17  1.9 0 0 0 -0.78"/></filter>
<filter id="nlb" x="0" y="0" width="1" height="1"><feTurbulence type="fractalNoise" baseFrequency="0.03 0.045" numOctaves="3" seed="23" result="t"/><feColorMatrix in="t" type="matrix" values="0 0 0 0 0.78  0 0 0 0 0.73  0 0 0 0 0.63  1.9 0 0 0 -0.85"/></filter>
<filter id="nwb" x="0" y="0" width="1" height="1"><feTurbulence type="fractalNoise" baseFrequency="0.02 0.22" numOctaves="2" seed="3" result="t"/><feColorMatrix in="t" type="matrix" values="0 0 0 0 0.25  0 0 0 0 0.2  0 0 0 0 0.15  2.4 0 0 0 -1.0"/></filter>
<filter id="nsb" x="0" y="0" width="1" height="1"><feTurbulence type="fractalNoise" baseFrequency="0.05 0.3" numOctaves="2" seed="9" result="t"/><feColorMatrix in="t" type="matrix" values="0 0 0 0 0.3  0 0 0 0 0.25  0 0 0 0 0.19  3 0 0 0 -1.25"/></filter>
<linearGradient id="skyb" x1="0" y1="0" x2="1" y2="0"><stop offset="0" stop-color="#85776a"/><stop offset="0.4" stop-color="#8d7f6d"/><stop offset="0.75" stop-color="#998b78"/><stop offset="1" stop-color="#8d7f6d"/></linearGradient>
<linearGradient id="topb" x1="0" y1="0" x2="1" y2="0"><stop offset="0" stop-color="#cec5b2"/><stop offset="0.5" stop-color="#cdc3af"/><stop offset="1" stop-color="#d5ccba"/></linearGradient>
<linearGradient id="flrb" x1="0" y1="0" x2="0" y2="1"><stop offset="0" stop-color="#918370"/><stop offset="0.35" stop-color="#a89b87"/><stop offset="1" stop-color="#b1a490"/></linearGradient>
<linearGradient id="trsb" x1="0" y1="0" x2="1" y2="0"><stop offset="0" stop-color="#b5a792"/><stop offset="0.3" stop-color="#aea08b"/><stop offset="0.5" stop-color="#968874"/><stop offset="0.7" stop-color="#ab9d88"/><stop offset="1" stop-color="#a1937f"/></linearGradient>
<linearGradient id="hullb" x1="0" y1="0" x2="0" y2="1"><stop offset="0" stop-color="#463c35"/><stop offset="1" stop-color="#4c4239"/></linearGradient>
<radialGradient id="wvLb" cx="0.35" cy="0.45" r="0.7"><stop offset="0" stop-color="#cdc1ab"/><stop offset="0.6" stop-color="#b3a690"/><stop offset="1" stop-color="#8c7f6d"/></radialGradient>
<linearGradient id="fdkb" x1="0" y1="0" x2="1" y2="0"><stop offset="0" stop-color="#6f6353" stop-opacity="0.85"/><stop offset="1" stop-color="#7d705f" stop-opacity="0"/></linearGradient>
<filter id="toneb" x="0" y="0" width="252" height="383" filterUnits="userSpaceOnUse" color-interpolation-filters="sRGB"><feColorMatrix type="matrix" values="0.2166 0.7286 0.0736 0 0.0345  0.2131 0.7168 0.0724 0 -0.0082  0.1966 0.6614 0.0668 0 -0.0179  0 0 0 1 0"/></filter>
<clipPath id="pcb"><rect x="0" y="0" width="252" height="383"/></clipPath>
<clipPath id="wclb"><path d="M0,238 L30,235 C40,244 52,258 66,286 C68,296 64,306 54,311 C38,318 14,318 0,312 Z M252,227 C236,233 218,240 206,247 C196,255 188,264 183,274 C181,288 184,300 194,308 C212,318 238,316 252,311 Z"/></clipPath>
</defs><g clip-path="url(#pcb)"><g filter="url(#toneb)"><rect width="252" height="383" fill="#978a77"/><rect x="0" y="50" width="252" height="140" fill="url(#skyb)"/><g filter="url(#b4b)"><ellipse cx="206" cy="128" rx="36" ry="20" fill="#bcb09c" opacity="0.95"/><ellipse cx="176" cy="94" rx="28" ry="8" fill="#ab9e8a" opacity="0.8"/><ellipse cx="222" cy="160" rx="30" ry="12" fill="#b1a48f" opacity="0.85"/><ellipse cx="50" cy="100" rx="18" ry="12" fill="#a09381" opacity="0.8"/><ellipse cx="36" cy="150" rx="14" ry="24" fill="#776a5c" opacity="0.8"/><ellipse cx="226" cy="92" rx="20" ry="12" fill="#726457" opacity="0.8"/><ellipse cx="160" cy="150" rx="16" ry="14" fill="#837566" opacity="0.6"/><ellipse cx="190" cy="108" rx="18" ry="7" fill="#7c6e60" opacity="0.6"/></g><g opacity="0.6"><rect x="19" y="72" width="231" height="112" filter="url(#nzb)"/></g><g opacity="0.35"><rect x="19" y="72" width="231" height="112" filter="url(#nlb)"/></g><rect x="0" y="0" width="252" height="54" fill="url(#topb)"/><g filter="url(#b4b)"><ellipse cx="60" cy="42" rx="50" ry="9" fill="#c3b9a5" opacity="0.8"/><ellipse cx="225" cy="14" rx="26" ry="12" fill="#d9d1c0" opacity="0.8"/><ellipse cx="200" cy="44" rx="40" ry="8" fill="#c9bfab" opacity="0.7"/></g><rect x="157.8" y="1" width="6.2" height="53" fill="#5f5449" filter="url(#b0b)"/><g filter="url(#b1b)"><path d="M17,50 L34,53 L120,52.5 L252,53 L252,75 L215,73 L170,77 L120,73 L70,76 L21,74 Z" fill="#62564a"/><path d="M24,55 L248,55.5 L248,60 L30,60 Z" fill="#4f453a" opacity="0.85"/><path d="M24,66 L150,65 L248,68 L248,71 L150,69 L24,70 Z" fill="#574c41" opacity="0.6"/><path d="M30,53.5 L46,54 L40,57 Z" fill="#c9bfab"/></g><g filter="url(#b0b)"><path d="M0,0 L0,9 L17,52 L20,74 L19.5,185 L0,186 Z" fill="#766a5b"/><path d="M16.5,52 L20.5,52 L20.5,184 L17,184 Z" fill="#5e5246" opacity="0.85"/><path d="M0,6 L0,186 L2.5,186 L2.5,12 Z" fill="#73675a" opacity="0.7"/></g><rect x="0" y="184" width="252" height="170" fill="#948773"/><g filter="url(#b2b)"><rect x="0" y="186" width="26" height="52" fill="#908370"/><rect x="222" y="186" width="30" height="46" fill="#b5a994"/></g><g opacity="0.55"><rect x="0" y="186" width="252" height="60" filter="url(#nwb)"/></g><g filter="url(#b0b)"><path d="M21,187 L60,196 L190,198 L227,190 L221,214 C218,240 213,262 204,274 L52,276 C38,256 28,228 21,187 Z" fill="url(#hullb)"/><path d="M20,186 C28,183.5 38,181.5 46,180.5 L48,196 L62,199 L62,209 C48,208 36,206 27,203 Z" fill="#b3a793"/><path d="M182,175 C198,176 215,180 228,186.5 L223,204 C210,208 197,209.5 182,209.5 Z" fill="#b6aa96"/><path d="M182,175.5 C198,176.5 215,180.5 227.5,187" stroke="#463c33" stroke-width="1.4" fill="none"/><path d="M183,190 C198,191.5 212,190.5 225,188" stroke="#53483e" stroke-width="1" fill="none"/><path d="M21,186.5 C29,184 38,182 46,181" stroke="#463c33" stroke-width="1.2" fill="none"/><path d="M25,192 C33,194 42,196 50,197" stroke="#53483e" stroke-width="0.9" fill="none"/><path d="M184,168 L184.6,180" stroke="#3f352d" stroke-width="1.6"/></g><g filter="url(#b2b)"><rect x="-5" y="302" width="262" height="54" fill="#63574b"/><rect x="206" y="300" width="50" height="52" fill="#8d806e"/></g><g filter="url(#b2b)"><path d="M0,238 L30,235 C40,244 52,258 66,286 C68,296 64,306 54,311 C38,318 14,318 0,312 Z" fill="url(#wvLb)"/><path d="M252,227 C236,233 218,240 206,247 C196,255 188,264 183,274 C181,288 184,300 194,308 C212,318 238,316 252,311 Z" fill="url(#wvLb)"/></g><g clip-path="url(#wclb)" opacity="0.8"><g transform="rotate(18 30 275)"><rect x="-20" y="220" width="110" height="110" filter="url(#nsb)"/></g><g transform="rotate(-18 220 272)"><rect x="160" y="215" width="120" height="115" filter="url(#nsb)"/></g></g><g filter="url(#b1b)" fill="none"><path d="M0,247 C16,240 36,243 50,256" stroke="#d0c3ac" stroke-width="3.5" opacity="0.75"/><path d="M252,243 C236,236 216,239 203,251" stroke="#d0c3ac" stroke-width="3.5" opacity="0.75"/><path d="M0,300 C20,306 44,304 62,296" stroke="#62564a" stroke-width="5" opacity="0.6"/><path d="M252,298 C232,304 208,302 190,294" stroke="#62564a" stroke-width="5" opacity="0.6"/></g><rect x="0" y="350.5" width="252" height="33" fill="url(#flrb)"/><rect x="0" y="350.5" width="120" height="33" fill="url(#fdkb)"/><rect x="0" y="347" width="252" height="6" fill="#52473c" opacity="0.55" filter="url(#b1b)"/><g stroke="#6a5d4e" stroke-width="0.9" opacity="0.85" fill="none"><path d="M18,364.5 H248"/><path d="M79,364.5 L72,383 M121,365 L119.5,383 M163.5,365 L166,383 M204,365 L211,383 M42,364.5 L30,383"/></g><g filter="url(#b0b)"><path d="M2,354 L16,352 L17,379 L4,382 Z" fill="#897b67"/><path d="M3.5,354 L15.5,352.5 L15.5,358.5 L5,360.5 Z" fill="#bbae98"/><path d="M52,357.5 L62,355.5 L66,359.5 L55,361.5 Z" fill="#dad1bf"/><circle cx="243" cy="374" r="1.8" fill="#2f2822"/></g><g filter="url(#b0pb)"><path d="M88,288 L102,282 L104,346 L90,349 Z" fill="#5a4f45"/><path d="M122,316 L150,317 L148,346 L126,349 Z" fill="#4a4038"/><path d="M60,228 L66,228 L68,300 L62,262 Z" fill="#51463c" opacity="0.7"/><path d="M63,222 L127,220 L127.5,262 L125.5,345 L103,346.5 L100.5,286 L93,289 L89.5,350 L68,350 L66,262 Z" fill="url(#trsb)"/><path d="M76.5,236 L79,349" stroke="#c6b9a3" stroke-width="1.8" opacity="0.75"/><path d="M112,232 L113,344" stroke="#8f806c" stroke-width="1.5" opacity="0.5"/><path d="M65,350 C70,346.5 83,346.5 87,350 L85.5,362 C79,368.5 68.5,367.5 64.5,362 Z" fill="#3d342d"/><path d="M98.5,346 C108,342.5 121,346 137,352.5 C139,358.5 131,361.5 120,360.5 C109,359.5 99.5,355.5 97.5,350.5 Z" fill="#3a312a"/><path d="M138,347 C146,340.5 157,342 163.5,348.5 C162.5,356.5 150,360.5 140,358.5 C135.5,356.5 135,351 138,347 Z" fill="#352d27"/><path d="M149.5,319 L164,319 L163,343 L149.5,346 Z" fill="#e2dac9"/><path d="M149.5,325 L164,324 L164,328 L149.5,329 Z" fill="#5a4e43"/><path d="M127,196 L173,196 L181,240 L187,315 C171,320 141,322 121.5,316 L124.5,262 Z" fill="#d3c7b2"/><path d="M127,200 L140,200 L137,260 L124,300 Z" fill="#c4b7a0" opacity="0.7"/><path d="M141.5,272 L144.5,318" stroke="#95887400" stroke-width="1.6"/><path d="M141.5,272 L144.5,318" stroke="#978a76" stroke-width="1.5"/><path d="M127.6,122 C135,116 150,115 160,120.5 C172,126 180.5,140 182.5,160 L185.5,219 L172.5,221 L171.5,206 L129,209 L124.5,197 C118.5,181 112.5,160 114.2,146 C116,134 120.5,127.5 127.6,122 Z" fill="#e8e1d2"/><path d="M130.5,127 L141.5,152 L135.5,197" stroke="#c6bcaa" stroke-width="1.6" fill="none"/><path d="M171.5,150 L172.5,205" stroke="#d2c9b8" stroke-width="1.4" fill="none"/><path d="M127.6,112 L145.5,110 L146.5,119 L138,133 L130,126 Z" fill="#bfae97"/><path d="M129,124 C133,131 141,130 146,121" stroke="#5d5146" stroke-width="1.2" fill="none"/><path d="M120.5,96 C123,90 140,88 146,93 L146.5,108 C145,114 139,118.5 133.5,118 C127,117 121.5,110 120.5,102 Z" fill="#c4b49d"/><ellipse cx="127" cy="101.6" rx="2.8" ry="1.5" fill="#5f5246" opacity="0.8"/><ellipse cx="137.6" cy="100.8" rx="2.8" ry="1.5" fill="#5f5246" opacity="0.8"/><path d="M132,103 L131.2,108" stroke="#d2c3ad" stroke-width="1.4" opacity="0.8"/><path d="M129.4,111.8 h5.2" stroke="#85756a" stroke-width="1.5"/><path d="M143,98 L144.5,112" stroke="#9c8c79" stroke-width="2" opacity="0.6"/><path d="M141,90.5 C150,88 156,95 154.5,107 C153.5,113.5 150.5,117 146.5,116.5 C147,107 146,98 139,93.5 Z" fill="#4a4038"/><path d="M111.3,86 C112,75 127,69.5 142,73 C152.5,76.5 156.5,85 154.7,94 C146,89.5 134,90 124.5,97.5 C117.5,95 112,91 111.3,86 Z" fill="#ebe5d7"/><path d="M104.5,88 L112.5,81 L119,96.5 L108.5,95 Z" fill="#d5ccba" opacity="0.85"/><path d="M118,80 L124,96 M126,75 L129,93 M136,73 L135,90 M146,76 L142,90" stroke="#cfc6b4" stroke-width="1" fill="none"/><path d="M73.5,108 C62,114 49,121 45.5,128 C40.5,146 36.8,184 39.5,226 L60,231 L64,225 L100,229.5 L118,226 L127.6,220 C126,200 122,176 114,158 C113,146 116,134 116.3,126 C110,119 101,114.5 96.5,112 L93.7,139.5 Z" fill="#4f453e"/><path d="M39.5,226 L60,231 L58,200 L51,168 Z" fill="#5d5249"/><path d="M93.7,139.5 L88,190 L90,229" stroke="#3b322c" stroke-width="1.3" fill="none" opacity="0.8"/><path d="M73.5,106.5 L96.5,112.5 L95,132 L93.7,140 L84,122 Z" fill="#dcd3c1"/><path d="M85.5,117.5 L91,116.5 L93,131 L93.5,139 L89,131 Z" fill="#a49579"/><path d="M72,84 C72,78 80,75 89,76 C97,77 102.5,82 102.5,90 C102.5,99 98,106.5 92,109.5 C86,111.5 78,109 74.5,102 C72.5,98 71.6,90 72,84 Z" fill="#c1af97"/><path d="M71,86 C70,74 80,66.5 91,67.5 C101,68.5 106,76 104.3,89 C101.5,81 96,77.5 88,78.5 C81,79.5 77,82 75.5,91 Z" fill="#4e443c"/><ellipse cx="80.8" cy="89" rx="3.2" ry="1.7" fill="#7b6b5b" opacity="0.75"/><ellipse cx="92.8" cy="88.5" rx="3.2" ry="1.7" fill="#7b6b5b" opacity="0.75"/><path d="M86.5,90 L85.8,96.5" stroke="#d6c7b0" stroke-width="1.6" opacity="0.8"/><path d="M73,90 L74,99" stroke="#8e7e6c" stroke-width="1.5" opacity="0.7"/><path d="M81.5,99.2 C85,102.6 91,102.6 94.5,98.8 C91,100.6 85,100.8 81.5,99.2 Z" fill="#8a7968" stroke="#7f6f5f" stroke-width="0.8"/><path d="M51.5,225 L66,223.5 L67,240 L60,244.5 L52.5,240 Z" fill="#a69580"/><path d="M172.5,220 L185.5,218.5 L187.5,236 L176,240.5 Z" fill="#bfae97"/><path d="M157.8,251 L195.4,237.8 L201.1,264 L163.5,277.3 Z" fill="#3f362f"/></g><g fill="#e9e2d4" stroke="#b5a893" stroke-width="0.4"><circle cx="133" cy="213" r="1.9"/><circle cx="140" cy="218" r="1.9"/><circle cx="166" cy="227" r="1.9"/><circle cx="140" cy="233" r="1.9"/><circle cx="154" cy="238" r="1.9"/><circle cx="143" cy="245" r="1.9"/><circle cx="149" cy="248" r="1.9"/><circle cx="137" cy="250" r="1.9"/><circle cx="159" cy="255" r="1.9"/><circle cx="131" cy="265" r="1.9"/><circle cx="146" cy="263" r="1.9"/><circle cx="145" cy="273" r="1.9"/><circle cx="135" cy="282" r="1.9"/><circle cx="153" cy="280" r="1.9"/><circle cx="161" cy="287" r="1.9"/><circle cx="130" cy="298" r="1.9"/><circle cx="143" cy="307" r="1.9"/><circle cx="137" cy="314" r="1.9"/><circle cx="156" cy="314" r="1.9"/><circle cx="172" cy="310" r="1.9"/><circle cx="180" cy="302" r="1.9"/><circle cx="168" cy="318" r="1.9"/></g></g><rect x="248.4" y="0" width="3.6" height="383" fill="#eedcc1" opacity="0.95"/><rect x="0" y="0" width="252" height="1.4" fill="#eedcc1" opacity="0.6"/><rect x="0" y="0" width="1" height="383" fill="#eedcc1" opacity="0.6"/></g></svg></div>
</td></tr></tbody></table></div></div>
</body></html>
